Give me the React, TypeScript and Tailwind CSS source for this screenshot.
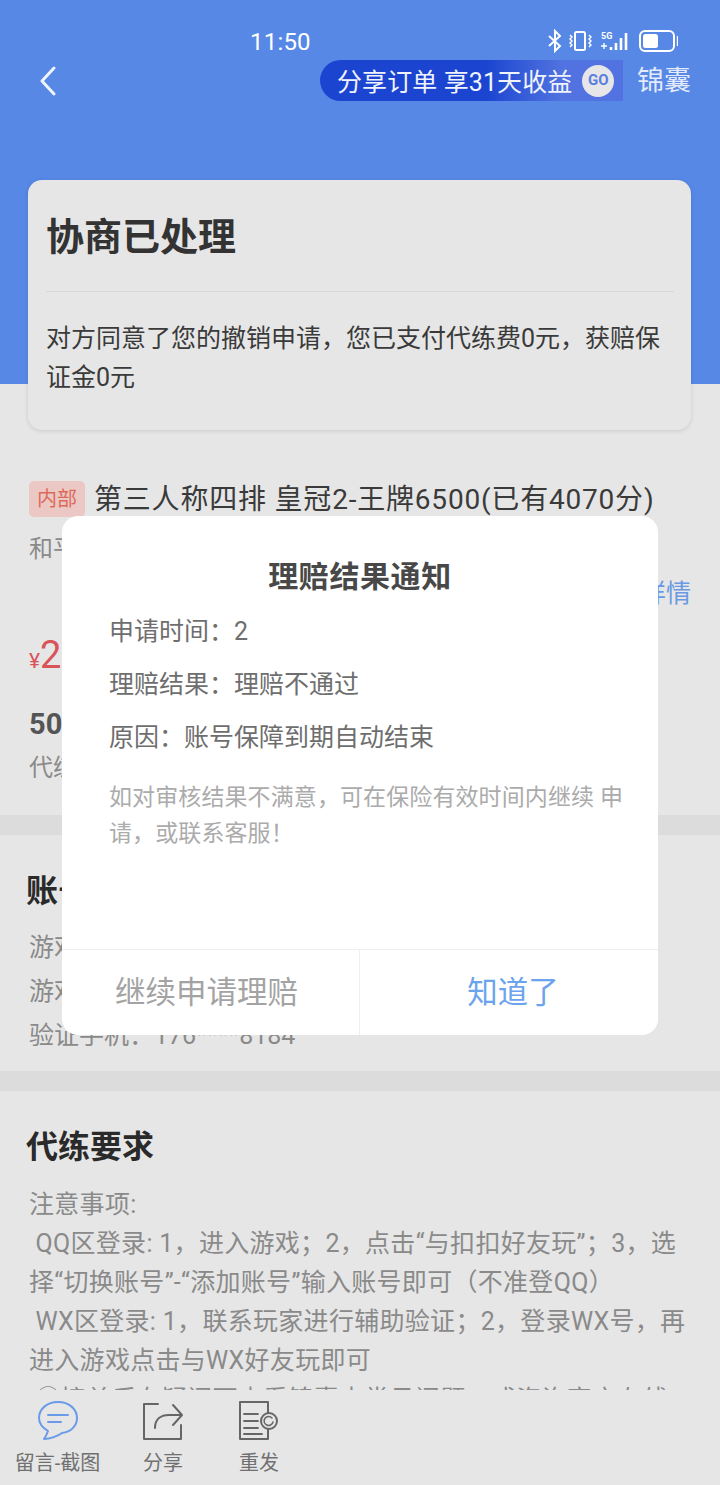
import React from "react";

const F = { fontFamily: '"Roboto","Noto Sans CJK SC",sans-serif' };

function StatusIcons() {
  return (
    <svg width="130" height="24" viewBox="0 0 130 24" fill="none" stroke="#fff" strokeWidth="2">
      <path d="M1 7l11 10-5 5V2l5 5L1 17" strokeWidth="2" />
      <rect x="27" y="3" width="10" height="18" rx="1.5" />
      <path d="M22 6l2 2-2 2 2 2-2 2 2 2-2 2M41 6l2 2-2 2 2 2-2 2 2 2-2 2" strokeWidth="1.4" />
      <text x="53" y="10" fontSize="9" fontWeight="700" fill="#fff" stroke="none" fontFamily="Roboto">5G</text>
      <path d="M56 14v6M53 17h6" strokeWidth="1.4" />
      <path d="M63 18v3M68 14v7M73 9v12M78 4v17" strokeWidth="2.6" />
      <rect x="92" y="2" width="34" height="20" rx="5" />
      <rect x="95" y="5" width="15" height="14" rx="2.5" fill="#fff" stroke="none" />
      <path d="M130 7v10" strokeWidth="2.4" />
    </svg>
  );
}

function Back() {
  return (
    <svg width="18" height="30" viewBox="0 0 18 30" fill="none" stroke="#eef3fd" strokeWidth="3" strokeLinecap="round" strokeLinejoin="round">
      <path d="M15 2 3 15l12 13" />
    </svg>
  );
}

function Header() {
  return (
    <div className="h-[384px] bg-[#5788e6]">
      <div className="h-[59px] pt-[27px] pl-[250px] pr-[43px] flex justify-between items-start text-white">
        <div className="text-[24px] leading-[30px] tracking-[0.2px]">11:50</div>
        <div className="mt-[2px] mr-[-1px]"><StatusIcons /></div>
      </div>
      <div className="flex items-center pl-[39px] pr-[29px]">
        <Back />
        <div className="ml-auto w-[303px] h-[41px] rounded-l-full rounded-tr-[18px] bg-gradient-to-r from-[#1b45d1] from-[55%] to-[#5172e0] to-[80%] flex items-center pl-[17px] text-white">
          <span className="text-[25px] leading-[41px] pt-[3px] tracking-[0.1px] whitespace-pre text-[#f0f3fc]">分享订单 享31天收益</span>
          <span className="ml-[10px] w-[32px] h-[32px] rounded-full bg-[#e6e6e9] text-[#5a7fdc] text-[15px] font-bold flex items-center justify-center">GO</span>
        </div>
        <div className="ml-[14px] pt-[2px] text-[27px] leading-[41px] text-[#e3eafb]">锦囊</div>
      </div>
    </div>
  );
}

function ResultCard() {
  return (
    <div className="ml-[28px] w-[663px] h-[250px] -mt-[204px] relative rounded-[14px] bg-[#e6e6e6] shadow-[0_1px_4px_rgba(0,0,0,0.12)] pl-[18px] pr-[17px]">
      <div className="h-[112px] border-b border-[#d8d8d8] pt-[29px] text-[38px] leading-[56px] font-bold text-[#333]">协商已处理</div>
      <div className="pt-[27px] text-[25px] leading-[39px] text-[#3a3a3a]">对方同意了您的撤销申请，您已支付代练费0元，获赔保证金0元</div>
    </div>
  );
}

function Product() {
  return (
    <div className="h-[385px] pl-[29px] pt-[49px] relative">
      <div className="flex items-center h-[40px]">
        <span className="w-[56px] h-[36px] rounded-[5px] bg-[#ecc8c4] text-[#dc6a5a] text-[20px] leading-[36px] text-center">内部</span>
        <span className="ml-[9px] pt-[1px] text-[28px] leading-[40px] tracking-[0.8px] text-[#3a3a3a] whitespace-nowrap">第三人称四排 皇冠2-王牌6500(已有4070分)</span>
      </div>
      <div className="mt-[12px] text-[24px] leading-[36px] text-[#8a8a8a]">和平精英</div>
      <div className="absolute right-[29px] top-[146px] text-[25px] leading-[36px] text-[#6a99e4]">详情</div>
      <div className="mt-[65px] flex items-baseline text-[#d9535a]">
        <span className="text-[21px]">¥</span>
        <span className="text-[38px] leading-[46px]">2</span>
      </div>
      <div className="mt-[26px] text-[29px] leading-[40px] font-bold text-[#555]">50</div>
      <div className="mt-[6px] text-[24px] leading-[36px] text-[#8a8a8a]">代练</div>
    </div>
  );
}

function Divider() {
  return <div className="h-[20px] bg-[#dcdcdc]" />;
}

function Account() {
  return (
    <div className="h-[236px] pl-[26px] pt-[36px]">
      <div className="text-[32px] leading-[40px] font-bold text-[#2a2a2a]">账号信息</div>
      <div className="mt-[15px] pl-[3px] text-[25px] leading-[44px] text-[#8a8a8a]">
        <div>游戏账号</div>
        <div>游戏密码</div>
        <div className="whitespace-pre">验证手机：176****8184</div>
      </div>
    </div>
  );
}

function Requirements() {
  return (
    <div className="pl-[26px] pr-[30px] pt-[36px]">
      <div className="text-[32px] leading-[40px] font-bold text-[#2a2a2a]">代练要求</div>
      <div className="mt-[18px] pl-[3px] text-[25px] leading-[39px] tracking-[0.3px] text-[#8a8a8a] whitespace-pre-wrap">
        <div>注意事项:</div>
        <div> QQ区登录: 1，进入游戏；2，点击“与扣扣好友玩”；3，选择“切换账号”-“添加账号”输入账号即可（不准登QQ）</div>
        <div> WX区登录: 1，联系玩家进行辅助验证；2，登录WX号，再进入游戏点击与WX好友玩即可</div>
        <div> ①接单后有疑问可查看锦囊中常见问题，或咨询官方在线客服</div>
      </div>
    </div>
  );
}

function ChatIcon() {
  return (
    <svg width="42" height="42" viewBox="0 0 42 42" fill="none" stroke="#6b9be8" strokeWidth="2">
      <path d="M21 2C10 2 2 9 2 18c0 6 4 10 9 13-1 3-2 5-4 8 6 0 14-3 18-6 9-1 15-7 15-15C40 9 32 2 21 2Z" strokeLinejoin="round" />
      <path d="M11 15h20M11 22h13" strokeWidth="2" strokeLinecap="round" />
    </svg>
  );
}

function ShareIcon() {
  return (
    <svg width="42" height="42" viewBox="0 0 42 42" fill="none" stroke="#666" strokeWidth="2" strokeLinecap="round" strokeLinejoin="round">
      <path d="M16 4H2v35h37V25" />
      <path d="M13 28c0-9 6-13 14-13h12M31 5l9 10-9 10" />
    </svg>
  );
}

function ResendIcon() {
  return (
    <svg width="42" height="42" viewBox="0 0 42 42" fill="none" stroke="#666" strokeWidth="2" strokeLinecap="round" strokeLinejoin="round">
      <path d="M30 13V2H2v37h28v-10" />
      <path d="M6 14h14M6 21h14M6 28h14M6 34h18" strokeWidth="1.8" />
      <circle cx="31" cy="21" r="8" />
      <path d="M34 18a4.5 4.5 0 1 0 1 4" strokeWidth="1.5" />
    </svg>
  );
}

function BottomBar() {
  const items = [
    { icon: <ChatIcon />, label: "留言-截图", w: "w-[115px]" },
    { icon: <ShareIcon />, label: "分享", w: "w-[96px]" },
    { icon: <ResendIcon />, label: "重发", w: "w-[96px]" },
  ];
  return (
    <div className="absolute left-0 right-0 bottom-0 h-[95px] bg-[#e6e6e6] flex pt-[10px]">
      {items.map((it) => (
        <div key={it.label} className={`${it.w} flex flex-col items-center`}>
          <div className="h-[42px]">{it.icon}</div>
          <div className="mt-[7px] text-[20px] leading-[28px] text-[#707070] whitespace-nowrap">{it.label}</div>
        </div>
      ))}
    </div>
  );
}

function Modal() {
  return (
    <div className="absolute left-[62px] top-[516px] w-[596px] h-[519px] bg-white rounded-[16px] flex flex-col">
      <div className="flex-1 pl-[47px] pr-[30px]">
        <div className="pt-[42px] ml-[-17px] text-center text-[30px] leading-[38px] tracking-[0.6px] font-bold text-[#484848]">理赔结果通知</div>
        <div className="mt-[17px] text-[25px] leading-[38px] text-[#6e6e6e] space-y-[15px]">
          <div className="whitespace-pre">申请时间：2</div>
          <div className="whitespace-pre">理赔结果：理赔不通过</div>
          <div className="whitespace-pre">原因：账号保障到期自动结束</div>
        </div>
        <div className="mt-[23px] text-[23px] leading-[36px] tracking-[0.1px] text-[#ababab]">如对审核结果不满意，可在保险有效时间内继续 申请，或联系客服！</div>
      </div>
      <div className="h-[86px] border-t border-[#efefef] flex text-[30.5px]">
        <div className="w-[298px] pr-[8px] border-r border-[#efefef] flex items-center justify-center text-[#a3a3a3]">继续申请理赔</div>
        <div className="flex-1 pl-[8px] flex items-center justify-center text-[#6ba3ec]">知道了</div>
      </div>
    </div>
  );
}

export default function App() {
  return (
    <div className="relative w-[720px] h-[1485px] overflow-hidden bg-[#e6e6e6]" style={F}>
      <Header />
      <ResultCard />
      <Product />
      <Divider />
      <Account />
      <Divider />
      <Requirements />
      <BottomBar />
      <Modal />
    </div>
  );
}
